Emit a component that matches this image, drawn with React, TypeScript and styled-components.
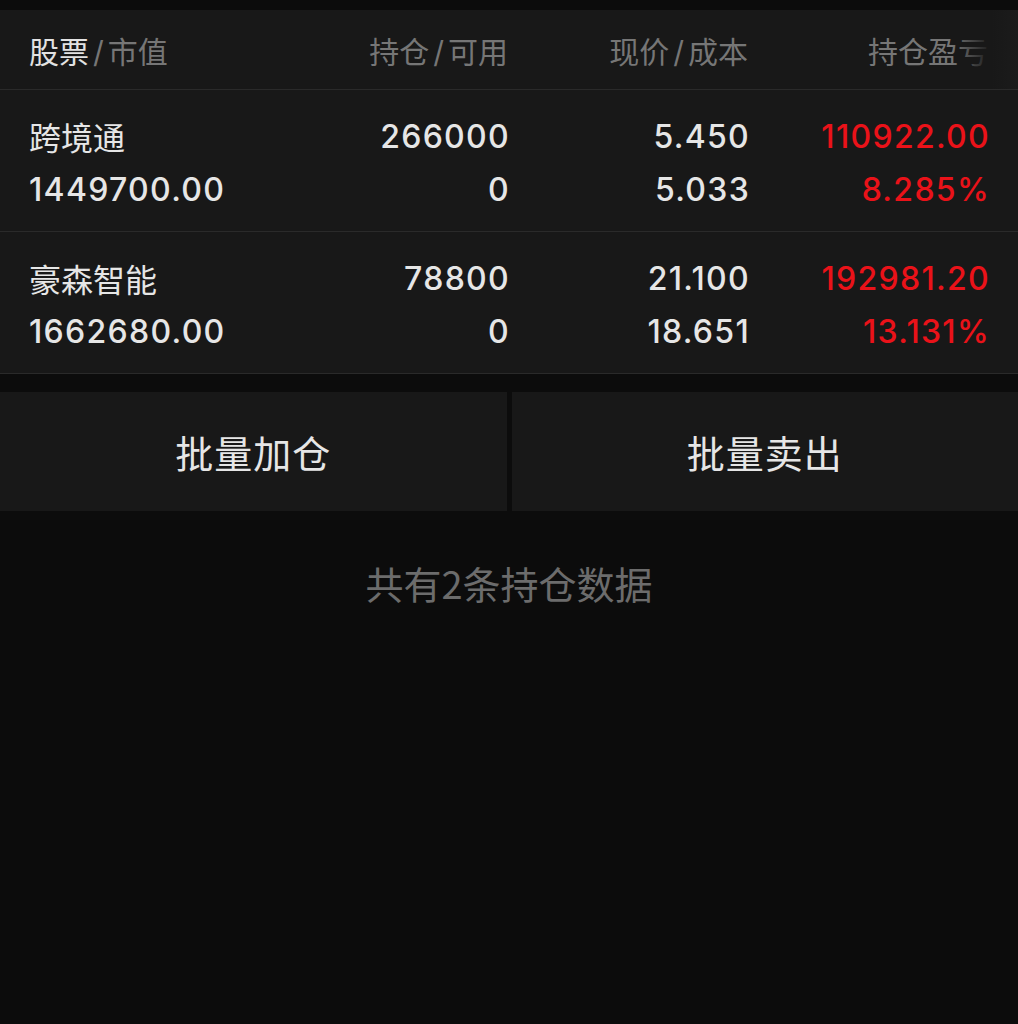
import styled, { createGlobalStyle } from "styled-components";

const GlobalStyle = createGlobalStyle`
  html, body {
    margin: 0;
    padding: 0;
    background: #0c0c0c;
  }
  body {
    font-family: "Inter", "Noto Sans CJK SC", sans-serif;
    -webkit-font-smoothing: antialiased;
  }
`;

const Page = styled.div`
  min-height: 1024px;
  background: #0c0c0c;
  padding-top: 10px;
`;

const Table = styled.div`
  background: #181818;
`;

const HeaderRow = styled.div`
  position: relative;
  display: grid;
  grid-template-columns: repeat(4, 1fr);
  align-items: center;
  height: 79px;
  padding: 0 29px;
  border-bottom: 1px solid #2a2a2a;
  font-size: 30px;
  color: #767676;
`;

const HeaderCell = styled.div<{ $left?: boolean }>`
  text-align: ${(p) => (p.$left ? "left" : "right")};
  white-space: nowrap;
  margin-right: ${(p) => (p.$left ? "0" : "1px")};
`;

const Strong = styled.span`
  color: #e2e2e2;
`;

const Slash = styled.span`
  margin: 0 4px;
`;

const Fade = styled.div`
  position: absolute;
  top: 0;
  right: 0;
  width: 66px;
  height: 100%;
  background: linear-gradient(to right, rgba(24, 24, 24, 0) 0%, #181818 60%, #1b1b1b 100%);
  pointer-events: none;
`;

const StockRow = styled.div`
  display: grid;
  grid-template-columns: repeat(4, 1fr);
  grid-template-rows: 53px 53px;
  align-content: center;
  height: 137px;
  padding: 4px 29px 0;
  border-bottom: 1px solid #2a2a2a;
  font-size: 32px;
  font-weight: 500;
  letter-spacing: 1.3px;
  color: #e6e6e6;
`;

const Cell = styled.div<{ $left?: boolean; $up?: boolean }>`
  display: flex;
  align-items: center;
  justify-content: ${(p) => (p.$left ? "flex-start" : "flex-end")};
  color: ${(p) => (p.$up ? "#ea1219" : "#e6e6e6")};
  white-space: nowrap;
  margin-right: ${(p) => (p.$left ? "0" : "-1px")};
`;

const Name = styled.span`
  font-size: 32px;
  font-weight: 400;
  letter-spacing: 0;
`;

const Actions = styled.div`
  display: flex;
  gap: 5px;
  margin-top: 18px;
`;

const ActionButton = styled.button`
  flex: 1;
  height: 119px;
  border: none;
  background: #181818;
  color: #e6e6e6;
  font-family: "Noto Sans CJK SC", sans-serif;
  font-size: 38px;
  letter-spacing: 1px;
  cursor: pointer;
`;

const Summary = styled.div`
  padding-top: 44px;
  text-align: center;
  font-family: "Noto Sans CJK SC", sans-serif;
  font-size: 38px;
  color: #6c6c6c;
`;

type Holding = {
  name: string;
  value: string;
  qty: string;
  avail: string;
  price: string;
  cost: string;
  profit: string;
  ratio: string;
};

const holdings: Holding[] = [
  {
    name: "跨境通",
    value: "1449700.00",
    qty: "266000",
    avail: "0",
    price: "5.450",
    cost: "5.033",
    profit: "110922.00",
    ratio: "8.285%",
  },
  {
    name: "豪森智能",
    value: "1662680.00",
    qty: "78800",
    avail: "0",
    price: "21.100",
    cost: "18.651",
    profit: "192981.20",
    ratio: "13.131%",
  },
];

export default function App() {
  return (
    <Page>
      <GlobalStyle />
      <Table>
        <HeaderRow>
          <HeaderCell $left>
            <Strong>股票</Strong>
            <Slash>/</Slash>市值
          </HeaderCell>
          <HeaderCell>
            持仓<Slash>/</Slash>可用
          </HeaderCell>
          <HeaderCell>
            现价<Slash>/</Slash>成本
          </HeaderCell>
          <HeaderCell>持仓盈亏</HeaderCell>
          <Fade />
        </HeaderRow>
        {holdings.map((h) => (
          <StockRow key={h.name}>
            <Cell $left>
              <Name>{h.name}</Name>
            </Cell>
            <Cell>{h.qty}</Cell>
            <Cell>{h.price}</Cell>
            <Cell $up>{h.profit}</Cell>
            <Cell $left>{h.value}</Cell>
            <Cell>{h.avail}</Cell>
            <Cell>{h.cost}</Cell>
            <Cell $up>{h.ratio}</Cell>
          </StockRow>
        ))}
      </Table>
      <Actions>
        <ActionButton>批量加仓</ActionButton>
        <ActionButton>批量卖出</ActionButton>
      </Actions>
      <Summary>共有2条持仓数据</Summary>
    </Page>
  );
}
